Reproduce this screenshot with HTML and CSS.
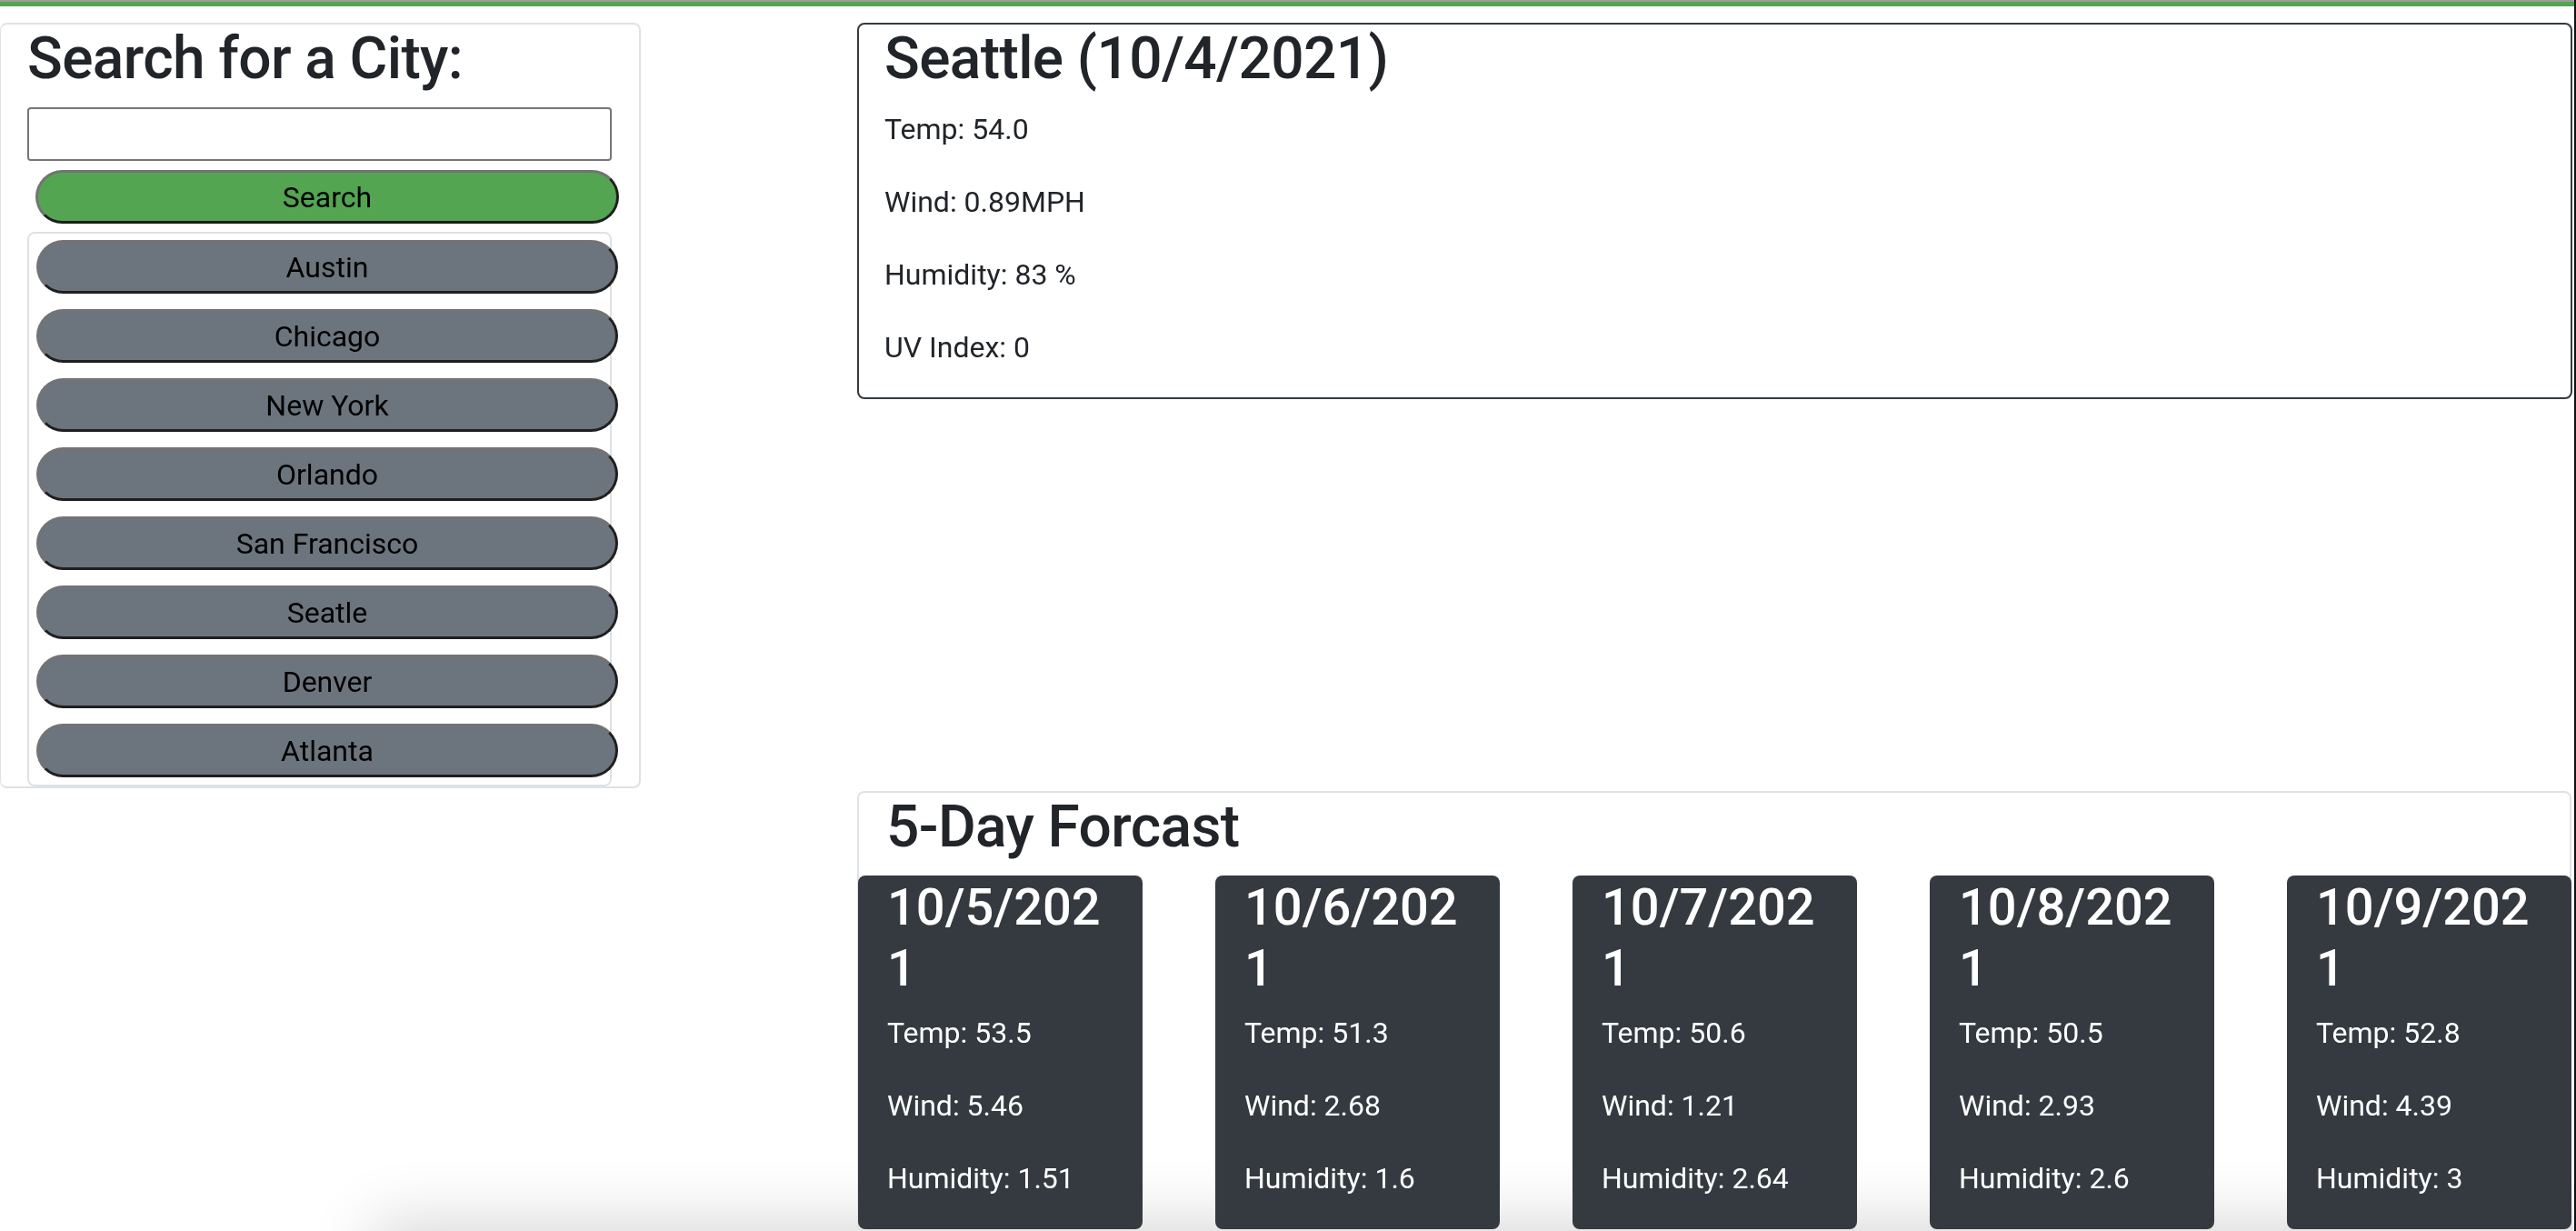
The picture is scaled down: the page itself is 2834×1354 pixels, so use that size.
FILE: index.html
```html
<!DOCTYPE html>
<html lang="en">
<head>
<meta charset="utf-8">
<title>Weather Dashboard</title>
<link rel="stylesheet" href="styles.css">
</head>
<body>
<div class="topbar"></div>
<div class="layout">
  <aside class="sidebar">
    <h2 class="title">Search for a City:</h2>
    <input class="search-input" type="text" aria-label="City">
    <button class="btn btn-search">Search</button>
    <div class="history">
      <button class="btn btn-city">Austin</button>
      <button class="btn btn-city">Chicago</button>
      <button class="btn btn-city">New York</button>
      <button class="btn btn-city">Orlando</button>
      <button class="btn btn-city">San Francisco</button>
      <button class="btn btn-city">Seatle</button>
      <button class="btn btn-city">Denver</button>
      <button class="btn btn-city">Atlanta</button>
    </div>
  </aside>
  <main class="main">
    <section class="current">
      <h2 class="title">Seattle (10/4/2021)</h2>
      <p class="stat">Temp: 54.0</p>
      <p class="stat">Wind: 0.89MPH</p>
      <p class="stat">Humidity: 83 %</p>
      <p class="stat">UV Index: 0</p>
    </section>
    <section class="forecast">
      <h2 class="title forecast-title">5-Day Forcast</h2>
      <div class="days">
        <div class="day">
          <h3 class="day-date">10/5/2021</h3>
          <p class="stat">Temp: 53.5</p>
          <p class="stat">Wind: 5.46</p>
          <p class="stat">Humidity: 1.51</p>
        </div>
        <div class="day">
          <h3 class="day-date">10/6/2021</h3>
          <p class="stat">Temp: 51.3</p>
          <p class="stat">Wind: 2.68</p>
          <p class="stat">Humidity: 1.6</p>
        </div>
        <div class="day">
          <h3 class="day-date">10/7/2021</h3>
          <p class="stat">Temp: 50.6</p>
          <p class="stat">Wind: 1.21</p>
          <p class="stat">Humidity: 2.64</p>
        </div>
        <div class="day">
          <h3 class="day-date">10/8/2021</h3>
          <p class="stat">Temp: 50.5</p>
          <p class="stat">Wind: 2.93</p>
          <p class="stat">Humidity: 2.6</p>
        </div>
        <div class="day">
          <h3 class="day-date">10/9/2021</h3>
          <p class="stat">Temp: 52.8</p>
          <p class="stat">Wind: 4.39</p>
          <p class="stat">Humidity: 3</p>
        </div>
      </div>
    </section>
  </main>
</div>
<div class="window-edge"></div>
<div class="bottom-shade"></div>
</body>
</html>
```

FILE: styles.css
```css
html {
  background: #ffffff;
}
body {
  margin: 0;
  font-family: Roboto, "Liberation Sans", Arial, sans-serif;
  color: #212529;
  font-size: 32px;
  line-height: 1.5;
  overflow: hidden;
}
.topbar {
  height: 5px;
  border-top: 2px solid #9c9c9c;
  background: #53a552;
}
.layout {
  display: flex;
  align-items: flex-start;
  margin-top: 18px;
}
.title {
  margin: 0 0 14px;
  font-size: 64px;
  font-weight: 500;
  line-height: 1.2;
  letter-spacing: -0.6px;
}
.sidebar {
  box-sizing: border-box;
  width: 705px;
  border: 2px solid #dee2e6;
  border-left-width: 1px;
  border-radius: 8px;
  padding: 0 30px 0 29px;
}
.search-input {
  display: block;
  box-sizing: border-box;
  width: 643px;
  height: 59px;
  margin: 0;
  border: 2px solid #767676;
  border-radius: 4px;
  background: #fff;
  font: inherit;
}
.btn {
  display: block;
  box-sizing: border-box;
  height: 59px;
  padding: 1px 0 0;
  border: 3px solid;
  border-color: #737373 #1f1f1f #1f1f1f #737373;
  border-radius: 30px;
  font-family: Roboto, "Liberation Sans", Arial, sans-serif;
  font-size: 32px;
  line-height: 52px;
  color: #000;
  text-align: center;
}
.btn-search {
  width: 642px;
  margin: 10px 0 0 9px;
  background: #53a552;
}
.history {
  box-sizing: border-box;
  width: 643px;
  margin-top: 9px;
  border: 2px solid #dee2e6;
  border-radius: 8px;
  padding: 7px 0 8px 8px;
  display: flex;
  flex-direction: column;
  gap: 17px;
}
.btn-city {
  width: 640px;
  background: #6c757d;
}
.main {
  width: 1887px;
  margin-left: 238px;
}
.current {
  box-sizing: border-box;
  border: 2px solid #343a40;
  border-radius: 8px;
  padding: 0 28px;
  height: 414px;
}
.stat {
  margin: 0 0 32px;
  font-size: 32px;
  line-height: 48px;
}
.forecast {
  margin-top: 431px;
  width: 1886px;
  box-sizing: border-box;
  border: 2px solid #dee2e6;
  border-bottom: none;
  border-radius: 8px 8px 0 0;
}
.forecast-title {
  padding-left: 30px;
}
.days {
  display: flex;
  justify-content: space-between;
  margin: 0 -2px 0 -1px;
}
.day {
  box-sizing: border-box;
  width: 313px;
  padding: 2px 30px 0 32px;
  background: #343a40;
  color: #fff;
  border-radius: 8px;
  overflow-wrap: break-word;
  word-break: break-all;
}
.day-date {
  margin: 0 0 13px;
  font-size: 56px;
  font-weight: 500;
  line-height: 1.2;
}
.window-edge {
  position: fixed;
  top: 0;
  right: 0;
  bottom: 0;
  width: 2px;
  background: #111;
}
.bottom-shade {
  position: fixed;
  left: 420px;
  right: -200px;
  bottom: -70px;
  height: 70px;
  box-shadow: 0 0 70px 10px rgba(0, 0, 0, 0.16);
  z-index: -1;
}
```
